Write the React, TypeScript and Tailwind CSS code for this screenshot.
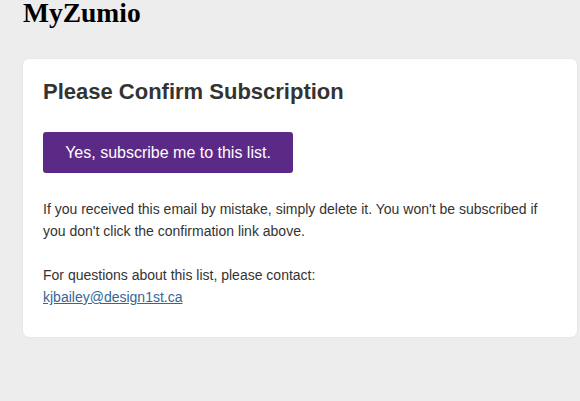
export default function App() {
  return (
    <div className="min-h-[401px] w-[580px] bg-[#ededed] pb-[63px]">
      <h1
        className="pl-[23px] pt-[1px] text-[27.5px] font-bold leading-[24px] text-black"
        style={{ fontFamily: '"Liberation Serif", "Times New Roman", serif' }}
      >
        MyZumio
      </h1>
      <div
        className="ml-[23px] mt-[34px] w-[554px] rounded-[6px] bg-white px-5 pb-[29px] pt-[20px] shadow-[0_0_2px_rgba(0,0,0,0.08)]"
        style={{ fontFamily: '"Liberation Sans", Arial, sans-serif' }}
      >
        <h2 className="text-[22px] font-bold leading-[26px] text-[#333333]">Please Confirm Subscription</h2>
        <button className="mt-[27px] h-[41px] w-[250px] rounded-[3px] bg-[#5b2a86] text-[16px] text-white">
          Yes, subscribe me to this list.
        </button>
        <p className="mt-[25px] text-[14px] leading-[22px] text-[#333333]">
          If you received this email by mistake, simply delete it. You won't be subscribed if you don't click the
          confirmation link above.
        </p>
        <p className="mt-[22px] text-[14px] leading-[22px] text-[#333333]">
          For questions about this list, please contact:
          <br />
          <a href="mailto:kjbailey@design1st.ca" className="text-[#336699] underline">
            kjbailey@design1st.ca
          </a>
        </p>
      </div>
    </div>
  )
}
